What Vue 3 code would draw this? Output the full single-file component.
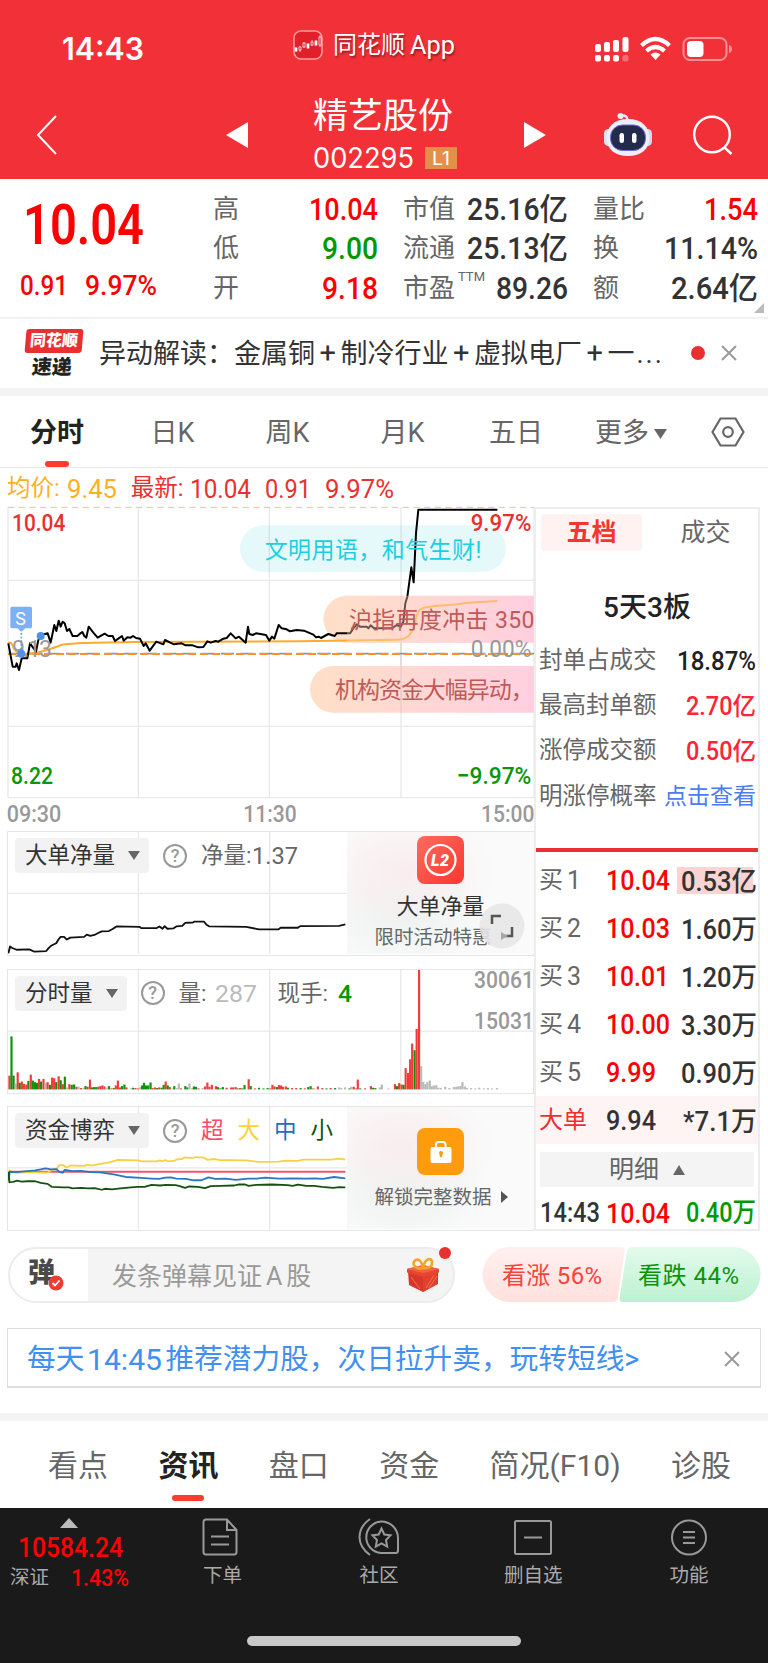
<script setup>
import { h } from 'vue'

// Text stretched to a fixed width, box height is the cap height
const Num = (props) => h('svg', { width: props.w, height: props.h, overflow: 'visible', class: 'num' }, [
    h('text', {
        x: 0,
        y: props.h,
        'font-size': props.h / (props.cap || 0.711),
        textLength: props.w,
        lengthAdjust: 'spacingAndGlyphs',
        fill: 'currentColor'
    }, props.t)
])
Num.props = ['t', 'w', 'h', 'cap']

const quotes = [
    [
        { label: '高', value: '10.04', w: 69, color: 'up' },
        { label: '低', value: '9.00', w: 56, color: 'down' },
        { label: '开', value: '9.18', w: 56, color: 'up' }
    ],
    [
        { label: '市值', value: '25.16亿', w: 101 },
        { label: '流通', value: '25.13亿', w: 101 },
        { label: '市盈', sup: 'TTM', value: '89.26', w: 72 }
    ],
    [
        { label: '量比', value: '1.54', w: 54, color: 'up' },
        { label: '换', value: '11.14%', w: 94 },
        { label: '额', value: '2.64亿', w: 87 }
    ]
]

const periods = ['分时', '日K', '周K', '月K', '五日']

const limits = [
    { label: '封单占成交', value: '18.87%', w: 79, color: 'dark' },
    { label: '最高封单额', value: '2.70亿', w: 70, color: 'rise' },
    { label: '涨停成交额', value: '0.50亿', w: 70, color: 'rise' }
]

const bids = [
    { n: 1, price: '10.04', w: 64, vol: '0.53亿', hot: true },
    { n: 2, price: '10.03', w: 64, vol: '1.60万' },
    { n: 3, price: '10.01', w: 63, vol: '1.20万' },
    { n: 4, price: '10.00', w: 64, vol: '3.30万' },
    { n: 5, price: '9.99', w: 50, vol: '0.90万' }
]

const priceLine = '25,430 38,500 47,500 50,490 57,510 65,475 82,475 90,430 108,455 115,420 125,405 143,400 152,428 163,375 169,393 176,362 182,380 188,365 194,370 201,393 208,387 218,408 232,408 240,401 247,396 253,408 259,413 266,380 280,398 293,413 314,401 325,408 338,408 345,423 356,415 366,408 371,422 382,412 392,413 399,408 408,414 420,416 431,438 437,430 449,452 460,437 469,425 490,433 495,420 511,428 522,433 545,430 557,436 578,436 595,442 610,441 622,424 632,428 647,423 655,425 670,416 680,414 692,400 707,415 717,410 737,428 744,380 748,402 758,405 768,400 798,405 808,422 816,410 823,416 836,375 845,385 860,388 870,394 890,390 912,392 940,404 948,412 956,410 963,414 985,402 1004,408 1010,400 1050,400 1060,385 1070,373 1080,380 1100,380 1105,385 1112,376 1122,385 1178,384 1190,375 1202,380 1210,365 1216,310 1222,290 1234,202 1241,247 1248,100 1255,29 1492,29'
const avgPath = 'M25 430Q32 422 38 438Q45 462 75 462C125 460 155 445 180 436C205 429 260 428 400 426L900 424L1190 419C1225 420 1235 400 1245 370C1251 335 1255 323 1290 320C1320 315 1360 315 1378 312C1400 306 1440 307 1492 303'
const netLine = '24,388 29,367 34,371 48,377 85,376 100,383 134,381 141,372 148,365 163,357 170,345 176,338 186,338 194,346 204,340 244,338 252,331 262,335 274,332 285,326 295,321 316,320 327,314 338,306 405,307 410,311 455,311 463,306 472,313 478,305 486,313 503,312 512,306 529,304 538,295 560,294 565,291 592,291 600,301 608,306 715,307 752,315 808,315 815,310 865,310 872,305 985,304 1003,300'
const bigLine = '25,227 35,232 48,235 80,233 100,234 137,235 148,228 165,222 172,212 184,212 193,219 205,213 246,214 253,210 266,213 290,208 318,203 342,196 402,197 410,200 455,200 464,197 472,200 480,196 487,200 505,199 514,194 528,193 537,188 560,190 567,187 592,189 604,196 620,193 636,196 715,197 750,202 810,201 830,198 865,199 880,195 960,195 985,192 1003,195'
const midLine = '25,258 28,232 47,233 80,230 102,228 118,225 132,222 148,225 164,224 172,233 182,235 188,226 210,230 235,229 262,233 290,234 330,240 365,248 410,251 440,253 462,254 480,250 496,249 512,253 540,254 562,258 585,258 605,249 625,254 655,253 685,257 720,253 745,253 770,250 810,253 850,252 890,253 915,252 938,254 970,248 1003,252'
const smallLine = '25,232 27,264 38,263 50,259 62,262 80,261 102,261 118,266 138,269 150,278 184,280 200,280 210,283 235,281 255,283 275,282 295,287 305,284 325,286 350,283 380,280 400,278 420,278 440,272 465,274 482,272 510,273 522,276 537,281 550,277 575,278 595,282 612,276 640,275 680,274 692,271 712,271 722,275 745,272 790,271 835,273 850,275 865,271 890,275 912,275 935,278 968,281 985,279 1003,280'

// x, height, colour of the volume bars
const sparse = '27,42r 33,162g 39,42g 45,18a 51,52r 57,20g 63,24r 69,17r 76,15r 82,26g 89,45r 95,27g 101,22g 107,20g 113,32r 119,24g 126,32r 132,20a 138,22r 145,14g 151,36r 157,34r 163,22g 170,40r 176,28g 182,16r 188,39g 194,6a 201,16r 208,14g 215,15g 222,8r 228,8a 235,4r 242,5a 248,10g 254,8r 261,30r 267,6g 273,7g 279,7g 285,8r 291,10r 297,12r 303,9r 309,5a 316,10g 323,3r 330,4g 336,12r 342,27r 348,6r 354,10g 361,15g 367,6r 380,3a 386,5g 393,4r 400,3r 406,6a 412,12g 418,20g 424,12g 430,12g 437,21g 443,4r 450,6r 456,4g 462,6r 469,5g 475,14g 481,24r 487,12g 493,7r 500,3a 506,10g 513,4a 519,18a 525,3r 538,10g 544,6g 550,18a 558,4a 563,9g 569,8g 576,3r 588,4a 595,9r 602,21r 608,8r 615,14r 627,10r 633,7g 640,3g 647,7g 658,5r 671,6r 677,6r 684,7r 690,3g 697,4r 703,3g 710,13g 722,31r 728,10g 740,3r 752,5g 765,3g 777,4g 785,3r 791,14r 797,9r 804,7g 810,13r 816,12r 822,8r 830,9r 836,5g 848,4r 860,4r 873,4g 885,3r 895,7g 902,10g 910,3r 923,9r 936,4r 948,3g 960,4r 973,4g 985,6a 991,4a 1002,6a 1015,3g 1020,8a 1027,8r 1033,3r 1039,30r 1046,3g 1060,3r 1077,10r 1083,5g 1090,4g 1103,6a 1109,15a 1128,3a 1147,16r 1153,10g 1159,19r 1166,15r 1172,14g 1178,65r 1185,50r 1191,92r 1197,140r 1204,120g 1210,185r 1217,365r 1223,71a 1229,23a 1235,16a 1241,22a 1248,27a 1254,9a 1260,12a 1267,13a 1273,5a 1280,4a 1293,8a 1305,4a 1318,7a 1325,8a 1331,9a 1337,10a 1343,22a 1350,9a 1356,4a 1368,4a 1380,3a 1392,5a 1405,3a 1417,4a 1429,3a 1443,4a'
const fills = { r: '#ef3b3b', g: '#0a940a', a: '#b9b9b9' }
const bars = sparse.split(' ').map((s) => {
    const [x, rest] = s.split(',')
    return { x: x - 3, h: parseInt(rest), fill: fills[rest.slice(-1)] }
})

const infoTabs = ['看点', '资讯', '盘口', '资金', '简况(F10)', '诊股']
</script>

<template>
    <div class="app">
        <header>
            <div class="status">
                <Num class="clock" t="14:43" :w="82" :h="22" />
                <div class="island">
                    <svg width="30" height="30" viewBox="0 0 30 30">
                        <rect x="1" y="1" width="28" height="28" rx="7" fill="#e0202a" stroke="#ff9a9c" stroke-width="1.6" />
                        <g stroke="#fff" stroke-width=".7" fill="#fff">
                            <path d="M3 17v5M7 16v6M11 12v6M15 13v6M19 10v6M23 10v6M27 5v12" />
                            <rect x="2" y="18" width="2" height="3" />
                            <rect x="6" y="17" width="2" height="3" fill="#e0202a" />
                            <rect x="10" y="13" width="2" height="4" fill="#e0202a" />
                            <rect x="14" y="14" width="2" height="4" />
                            <rect x="18" y="12" width="2" height="3" fill="#e0202a" />
                            <rect x="22" y="11" width="2" height="4" />
                            <rect x="26" y="7" width="2" height="8" fill="#e0202a" />
                        </g>
                    </svg>
                    <span>同花顺</span><Num class="app-word" t="App" :w="45" :h="18" />
                </div>
                <svg class="signals" width="138" height="26" viewBox="595 36 138 26" fill="#fff">
                    <rect x="595" y="44" width="6" height="8" rx="2" />
                    <rect x="604" y="42" width="6" height="10" rx="2" />
                    <rect x="613" y="40" width="6" height="12" rx="2" />
                    <rect x="622.500" y="37" width="6" height="15" rx="2" />
                    <rect x="595" y="55" width="6" height="6.500" rx="2" />
                    <rect x="604" y="55" width="6" height="6.500" rx="2" />
                    <rect x="613" y="55" width="6" height="6.500" rx="2" />
                    <rect x="622.500" y="55" width="6" height="6.500" rx="2" opacity=".3" />
                    <g fill="none" stroke="#fff" stroke-width="4.200">
                        <path d="M641.500 45.500Q655.500 32.500 669.500 45.500" />
                        <path d="M646.500 51Q655.500 43 664.500 51" />
                    </g>
                    <path d="M650.500 54.500Q655.500 50.500 660.500 54.500L655.500 60Z" />
                    <rect x="683.500" y="38" width="43" height="22" rx="6.500" fill="none" stroke="#ff9194" stroke-width="2" />
                    <rect x="687" y="41" width="16.500" height="16" rx="4" />
                    <path d="M729 45q3 1 3 4t-3 4z" fill="#ff9194" />
                </svg>
            </div>
            <div class="title">
                <svg class="back" width="22" height="40" viewBox="0 0 22 40"><path d="M20 1L2 20L20 39" fill="none" stroke="#fff" stroke-width="2" /></svg>
                <svg class="prev" width="22" height="26" viewBox="0 0 22 26"><path d="M22 0V26L0 13Z" fill="#fff" /></svg>
                <div class="name">
                    <h1>精艺股份</h1>
                    <div class="code">
                        <Num t="002295" :w="101" :h="20" />
                        <b><Num t="L1" :w="18" :h="13" /></b>
                    </div>
                </div>
                <svg class="next" width="22" height="26" viewBox="0 0 22 26"><path d="M0 0V26L22 13Z" fill="#fff" /></svg>
                <svg class="robot" width="48" height="45" viewBox="0 0 48 45">
                    <path d="M17 4q6-2 7 5" fill="none" stroke="#e6e6f6" stroke-width="2.500" />
                    <circle cx="16.500" cy="4" r="3" fill="#f0f0fb" />
                    <rect x="0" y="17" width="9" height="17" rx="4.500" fill="#dcdff2" />
                    <rect x="39" y="17" width="9" height="17" rx="4.500" fill="#d3d8f2" />
                    <path d="M24 7C38 7 45.500 15 45.500 26S37 44 24 44 2.500 37 2.500 26 10 7 24 7Z" fill="#eceefa" />
                    <rect x="6.500" y="13" width="35" height="25.500" rx="12" fill="#222b4c" stroke="#7168d8" stroke-width="1" />
                    <rect x="15.500" y="21" width="4.500" height="10" rx="2.200" fill="#fff" />
                    <rect x="28" y="21" width="4.500" height="10" rx="2.200" fill="#fff" />
                </svg>
                <svg class="search" width="40" height="40" viewBox="0 0 40 40" fill="none" stroke="#fff" stroke-width="2.400"><circle cx="19" cy="19.500" r="17.800" /><path d="M31 32L38.500 39" /></svg>
            </div>
        </header>

        <section class="quote">
            <div class="last up">
                <Num t="10.04" :w="121" :h="39" />
                <div class="change"><Num t="0.91" :w="48" :h="20" /><Num t="9.97%" :w="72" :h="20" /></div>
            </div>
            <ul v-for="(col, i) in quotes" :key="i">
                <li v-for="q in col" :key="q.label">
                    <span>{{ q.label }}<sup v-if="q.sup">{{ q.sup }}</sup></span>
                    <Num :class="q.color" :t="q.value" :w="q.w" :h="22" />
                </li>
            </ul>
            <i class="corner"></i>
        </section>

        <section class="notice">
            <div class="express">
                <div class="plate">同花顺</div>
                <div class="speed">速递</div>
            </div>
            <p>异动解读：金属铜<i>+</i>制冷行业<i>+</i>虚拟电厂<i>+</i>一<em>...</em></p>
            <i class="dot"></i>
            <svg width="16" height="16" viewBox="0 0 16 16"><path d="M1 1L15 15M15 1L1 15" stroke="#999" stroke-width="2" /></svg>
        </section>

        <nav class="periods">
            <span v-for="(p, i) in periods" :key="p" :class="{ active: i === 0 }">{{ p }}</span>
            <span class="more">更多<svg width="13" height="10" viewBox="0 0 13 10"><path d="M0 0H13L6.500 10Z" fill="#666" /></svg></span>
            <svg class="hex" width="34" height="30" viewBox="0 0 34 30" fill="none" stroke="#666" stroke-width="2.200"><path d="M9.500 1.500H24.500L32.500 15L24.500 28.500H9.500L1.500 15Z" /><circle cx="17" cy="15" r="4.800" /></svg>
        </nav>

        <div class="summary">
            <span class="avg">均价:<Num t="9.45" :w="50" :h="18" /></span>
            <span>最新:<Num t="10.04" :w="61" :h="18" /></span>
            <Num t="0.91" :w="46" :h="18" />
            <Num t="9.97%" :w="69" :h="18" />
        </div>

        <main>
            <div class="charts">
                <svg class="trend" width="534" height="331" viewBox="0 0 1602 993">
                    <defs>
                        <linearGradient id="warm"><stop offset="0" stop-color="#ffdfc8" /><stop offset="1" stop-color="#ffcfe0" /></linearGradient>
                    </defs>
                    <path d="M24 21V893H1602V21M24 241H1602M24 679H1602M415 21V893M808 21V893M1203 21V893" fill="none" stroke="#e9e9e9" stroke-width="4" />
                    <path d="M24 22H1602" stroke="#dcc7a6" stroke-width="3" stroke-dasharray="19 13" />
                    <g class="pills">
                        <rect x="720" y="76" width="798" height="140" rx="70" fill="#00c4dc" fill-opacity=".1" />
                        <path d="M1602 287H1041a70 70 0 0 0 0 141H1602Z" fill="url(#warm)" />
                        <path d="M1602 498H1000a70 70 0 0 0 0 140H1602Z" fill="url(#warm)" />
                    </g>
                    <path d="M1203 287V638" stroke="#dfc0bd" stroke-width="4" opacity=".6" />
                    <path d="M24 461H1602" stroke="#8b93a0" stroke-width="5" stroke-dasharray="40 18" />
                    <path d="M24 462H1602" stroke="#ff8f2b" stroke-width="6" stroke-dasharray="24 12" />
                    <path :d="avgPath" fill="none" stroke="#ffaa2e" stroke-width="6" />
                    <polyline :points="priceLine" fill="none" stroke="#000" stroke-width="6" stroke-linejoin="round" />
                    <path d="M1041 287H1602V428H1041Z" fill="url(#warm)" opacity=".38" />
                    <text class="mark" x="36" y="471" font-size="69" textLength="120" fill="#999">9.13</text>
                    <path d="M64 388V460" stroke="#5f9fee" stroke-width="5" stroke-dasharray="5 6" />
                    <circle cx="64" cy="461" r="12" fill="#4f93e8" />
                    <circle cx="122" cy="408" r="12" fill="#4f93e8" />
                    <path d="M36 320H91q5 0 5 5V380q0 5-5 5H76L64 395L52 385H36q-5 0-5-5V325q0-5 5-5Z" fill="#7db0f5" />
                    <text class="plain" x="46" y="375" font-size="54" textLength="34" fill="#fff">S</text>
                    <text class="say" x="794" y="173" font-size="69" textLength="650" fill="#1ccfdf">文明用语，和气生财!</text>
                    <text class="say" x="1047" y="384" font-size="69" textLength="556" fill="#bf5a57">沪指再度冲击 350</text>
                    <text class="say" x="1005" y="594" font-size="69" textLength="596" fill="#bf5a57">机构资金大幅异动，</text>
                    <text x="36" y="92" font-size="74" textLength="160" lengthAdjust="spacingAndGlyphs" fill="#e93030">10.04</text>
                    <text x="33" y="853" font-size="74" textLength="126" lengthAdjust="spacingAndGlyphs" fill="#0a960a">8.22</text>
                    <text x="1412" y="92" font-size="74" textLength="182" lengthAdjust="spacingAndGlyphs" fill="#e93030">9.97%</text>
                    <text class="mark" x="1412" y="472" font-size="69" textLength="182" lengthAdjust="spacingAndGlyphs" fill="#999">0.00%</text>
                    <text x="1370" y="853" font-size="74" textLength="224" lengthAdjust="spacingAndGlyphs" fill="#0a960a">−9.97%</text>
                    <g fill="#999" font-size="71" class="mark">
                        <text x="20" y="966" textLength="164" lengthAdjust="spacingAndGlyphs">09:30</text>
                        <text x="730" y="966" textLength="160" lengthAdjust="spacingAndGlyphs">11:30</text>
                        <text x="1443" y="966" textLength="160" lengthAdjust="spacingAndGlyphs">15:00</text>
                    </g>
                </svg>

                <div class="panel">
                    <svg class="plot" viewBox="23 18 1528 372" preserveAspectRatio="none">
                        <path class="grid" d="M402 18V390M783 18V390M23 205H1551" />
                        <polyline :points="netLine" class="line" stroke="#111" />
                    </svg>
                    <div class="legend">
                        <span class="pick">大单净量<i></i></span>
                        <b class="help">?</b>
                        <span class="net">净量:<Num t="1.37" :w="46" :h="17" /></span>
                    </div>
                    <div class="cover">
                        <svg width="47" height="48" viewBox="0 0 47 48">
                            <defs><linearGradient id="l2" x2="1" y2="1"><stop stop-color="#ff6b60" /><stop offset="1" stop-color="#fa372f" /></linearGradient></defs>
                            <rect width="47" height="48" rx="8" fill="url(#l2)" />
                            <circle cx="23.500" cy="24" r="15" fill="none" stroke="#fff" stroke-width="2.200" />
                            <text class="l2" x="14" y="30" font-size="16" textLength="18" fill="#fff">L2</text>
                        </svg>
                        <strong>大单净量</strong>
                        <span>限时活动特惠</span>
                        <svg class="expand" width="46" height="46" viewBox="0 0 46 46"><circle cx="23" cy="23" r="22.500" fill="#e6e6e6" opacity=".88" /><path d="M13 21V13H22M33 24V33H24" fill="none" stroke="#555" stroke-width="2.500" /><path d="M22 29L29 33L22 37Z" fill="#aaa" /></svg>
                    </div>
                </div>

                <div class="panel volume">
                    <svg class="plot" viewBox="23 25 1528 373" preserveAspectRatio="none">
                        <path class="grid" d="M402 25V398M783 25V398M1164 25V398M23 212H1551" />
                        <rect v-for="b in bars" :key="b.x" :x="b.x" :y="390 - b.h" width="6.300" :height="b.h" :fill="b.fill" />
                    </svg>
                    <div class="legend">
                        <span class="pick">分时量<i></i></span>
                        <b class="help">?</b>
                        <span class="qty">量:<Num t="287" :w="42" :h="17" /></span>
                        <span class="hand">现手:<Num t="4" :w="14" :h="17" /></span>
                    </div>
                    <div class="scale"><Num t="30061" :w="60" :h="17" /><Num t="15031" :w="60" :h="17" /></div>
                </div>

                <div class="panel">
                    <svg class="plot" viewBox="23 34 1528 373" preserveAspectRatio="none">
                        <path class="grid" d="M402 34V407M783 34V407M23 220H1551" />
                        <path d="M25 232H1003" class="line" stroke="#f2536b" />
                        <polyline :points="bigLine" class="line" stroke="#f8d142" />
                        <polyline :points="midLine" class="line" stroke="#2678c0" />
                        <polyline :points="smallLine" class="line" stroke="#14520f" />
                    </svg>
                    <div class="legend">
                        <span class="pick">资金博弈<i></i></span>
                        <b class="help">?</b>
                        <span class="sizes"><i>超</i><i>大</i><i>中</i><i>小</i></span>
                    </div>
                    <div class="cover locked">
                        <svg width="47" height="47" viewBox="0 0 47 47">
                            <rect width="47" height="47" rx="8" fill="#ff9c0d" />
                            <path d="M19 20V16.500q0-2.500 2.500-2.500H26q2.500 0 2.500 2.500V20" fill="none" stroke="#fff" stroke-width="2" />
                            <rect x="13.500" y="19" width="21" height="16" rx="2" fill="#fff" />
                            <path d="M24 24V29" stroke="#ff9c0d" stroke-width="2.400" /><circle cx="24" cy="25" r="2" fill="#ff9c0d" />
                        </svg>
                        <span>解锁完整数据</span>
                        <i class="go"></i>
                    </div>
                </div>
            </div>

            <aside>
                <div class="book-tabs"><b>五档</b><span>成交</span></div>
                <h2>5天3板</h2>
                <div v-for="l in limits" :key="l.label" class="limit">
                    <span>{{ l.label }}</span><Num :class="l.color" :t="l.value" :w="l.w" :h="18" />
                </div>
                <div class="limit"><span>明涨停概率</span><a>点击查看</a></div>
                <div class="rule"></div>
                <div v-for="b in bids" :key="b.n" class="bid">
                    <span>买<Num :t="b.n" :w="14" :h="18" /></span>
                    <Num class="up price" :t="b.price" :w="b.w" :h="19.5" />
                    <div :class="['vol', { hot: b.hot }]"><Num :t="b.vol" :w="76" :h="19.5" /></div>
                </div>
                <div class="bid big">
                    <span>大单</span>
                    <Num class="price" t="9.94" :w="50" :h="19.5" />
                    <div class="vol"><Num t="*7.1万" :w="74" :h="19.5" /></div>
                </div>
                <div class="detail">明细<i></i></div>
                <div class="tick">
                    <Num t="14:43" :w="60" :h="19" /><Num class="up price" t="10.04" :w="64" :h="19.5" /><Num class="down" t="0.40万" :w="70" :h="19" />
                </div>
            </aside>
        </main>

        <section class="comment">
            <div class="input">
                <div class="bullet">弹<svg width="16" height="16" viewBox="0 0 16 16"><circle cx="8" cy="8" r="7.500" fill="#f03a34" /><path d="M4.500 8L7 10.500L11.500 5.500" fill="none" stroke="#fff" stroke-width="1.800" /></svg></div>
                <p>发条弹幕见证<i>A</i>股</p>
                <svg class="gift" width="34" height="36" viewBox="0 0 34 36">
                    <path d="M2 14L17 10L32 14V27L17 35L3 28Z" fill="#d8352b" />
                    <path d="M17 19L31 15V27L17 35Z" fill="#e2402f" />
                    <path d="M5 20L14 32M20 31L28 18M23 31L31 19" stroke="#f4704c" stroke-width="1" />
                    <path d="M1 12L17 8L33 12V15.500L17 20L1 15.500Z" fill="#e84530" />
                    <path d="M1 12L17 8L33 12L17 16Z" fill="#f4623f" />
                    <path d="M17 11C8 13 5 5 10 3Q15 1 17 11C19 1 24 1 26 4Q27 12 17 11Z" fill="none" stroke="#f1a52b" stroke-width="2.600" />
                </svg>
                <i class="red"></i>
            </div>
            <svg class="vote" width="279" height="56" viewBox="0 0 279 56">
                <defs>
                    <linearGradient id="bull" x2="0" y2="1"><stop stop-color="#fff0ef" /><stop offset="1" stop-color="#ffe1dd" /></linearGradient>
                    <linearGradient id="bear" x2="0" y2="1"><stop stop-color="#e3fbec" /><stop offset="1" stop-color="#bdf0d2" /></linearGradient>
                </defs>
                <path d="M28 0H139q4 0 3.500 4L136 51q-1 4-5 4H28a27.500 27.500 0 0 1 0-55Z" fill="url(#bull)" />
                <path d="M150 0H251a27.500 27.500 0 0 1 0 55H141q-4 0-3.500-4L145 4q1-4 5-4Z" fill="url(#bear)" />
                <text x="20" y="37" font-size="24" textLength="100" fill="#f8433b">看涨 56%</text>
                <text x="156" y="37" font-size="24" textLength="101" fill="#0a940a">看跌 44%</text>
            </svg>
        </section>

        <section class="ad">
            <p>每天<Num t="14:45" :w="75" :h="21" />推荐潜力股，次日拉升卖，玩转短线&gt;</p>
            <svg width="16" height="16" viewBox="0 0 16 16"><path d="M1 1L15 15M15 1L1 15" stroke="#999" stroke-width="2" /></svg>
        </section>

        <nav class="info">
            <span v-for="(t, i) in infoTabs" :key="t" :class="{ active: i === 1 }">{{ t }}</span>
        </nav>

        <footer>
            <div class="bar">
                <div class="index">
                    <i></i>
                    <Num class="up" t="10584.24" :w="105" :h="20" />
                    <div><span>深证</span><Num class="up" t="1.43%" :w="58" :h="17" /></div>
                </div>
                <div class="item order">
                    <svg width="38" height="38" viewBox="2 0 38 38"><path d="M3 1.500H25L34.500 12V34q0 2.500-2.500 2.500H4q-2.500 0-2.500-2.500V4q0-2.500 2.500-2.500M25 2V12H34M9 18.500H27M9 26.500H27" /></svg>
                    <span>下单</span>
                </div>
                <div class="item social">
                    <svg width="42" height="38" viewBox="0 0 42 38"><path d="M12 1C-2 11-2 27 12 37M23 3.500A16 15.800 0 0 0 23 35H37.500q2.500 0 2.500-2.500V20A16.800 16.500 0 0 0 23 3.500Z" /><path d="M23.500 10.500L26.300 16.500L32.500 17.300L28 22L29.200 28.500L23.500 25.300L17.800 28.500L19 22L14.500 17.300L20.700 16.500Z" /></svg>
                    <span>社区</span>
                </div>
                <div class="item remove">
                    <svg width="38" height="38" viewBox="0 0 38 38"><rect x="1" y="3" width="36" height="33" rx="1.500" /><path d="M10 19.500H28" /></svg>
                    <span>删自选</span>
                </div>
                <div class="item tools">
                    <svg width="38" height="38" viewBox="0 0 38 38"><circle cx="19" cy="19.500" r="17" /><path d="M13 14H25M13 19.500H25M13 25H25" /></svg>
                    <span>功能</span>
                </div>
            </div>
            <div class="home"></div>
        </footer>
    </div>
</template>

<style>
    body {
        margin: 0;
        background: #fff;
    }
</style>

<style scoped>
    .app {
        width: 768px;
        height: 1663px;
        overflow: hidden;
        font-family: Roboto, "Noto Sans CJK SC", sans-serif;
        color: #333;
        line-height: 1;
        white-space: nowrap;
    }
    .app * {
        box-sizing: border-box;
    }
    svg {
        display: block;
        flex: none;
    }
    .num {
        font-weight: 500;
    }
    h1, h2, p, ul {
        margin: 0;
        padding: 0;
        font-weight: 400;
    }
    i, em {
        font-style: normal;
    }
    .up {
        color: #ff0000;
    }
    .down {
        color: #009900;
    }
    .rise {
        color: #ff2436;
    }
    .dark {
        color: #222;
    }

    header {
        height: 179px;
        background: #f23038;
        color: #fff;
    }
    .status {
        height: 90px;
        display: flex;
        padding-left: 62px;
    }
    .clock {
        margin-top: 38px;
        font-family: Inter, sans-serif;
        font-weight: 600;
    }
    .island {
        display: flex;
        margin: 30px 0 0 149px;
        width: 302px;
        font-size: 24px;
    }
    .island span {
        margin: 3px 5px 0 10px;
        text-shadow: 1px 2px 2px #0006;
    }
    .app-word {
        margin-top: 6px;
        font-weight: 400;
        text-shadow: 1px 2px 2px #0006;
    }
    .signals {
        margin-top: 36px;
    }
    .title {
        height: 89px;
        display: flex;
    }
    .back {
        margin: 25px 0 0 36px;
    }
    .prev {
        margin: 32px 0 0 168px;
    }
    .name {
        width: 144px;
        margin: 9px 67px 0 65px;
    }
    h1 {
        font-size: 35px;
        line-height: 36px;
    }
    .code {
        display: flex;
        margin-top: 12px;
        align-items: center;
    }
    .code .num {
        font-weight: 400;
        font-family: Inter, sans-serif;
    }
    .code b {
        display: flex;
        align-items: center;
        justify-content: center;
        width: 32px;
        height: 22px;
        margin-left: 11px;
        background: #e38f4a;
    }
    .next {
        margin-top: 32px;
    }
    .robot {
        margin: 22px 0 0 58px;
    }
    .search {
        margin: 25px 0 0 41px;
    }

    .quote {
        height: 140px;
        border-bottom: 2px solid #f1f1f1;
        display: flex;
    }
    .last {
        width: 213px;
        padding: 26px 0 0 23px;
    }
    .last > .num {
        font-weight: 600;
    }
    .change {
        display: flex;
        gap: 17px;
        margin: 31px 0 0 -3px;
    }
    .quote ul {
        list-style: none;
        width: 165px;
        padding-top: 10px;
        margin-right: 25px;
    }
    .quote ul:nth-child(4) {
        width: 165px;
        margin-right: 0;
    }
    .quote li {
        height: 39.500px;
        display: flex;
        align-items: center;
        justify-content: space-between;
        font-size: 26px;
    }
    .quote li span {
        display: flex;
        color: #666;
    }
    .quote li .num {
        font-weight: 550;
    }
    .quote sup {
        font-size: 13px;
        line-height: 10px;
        margin: -3px 0 0 3px;
    }
    .corner {
        align-self: flex-end;
        margin: 0 0 4px -4px;
        border: 5px solid #bbb;
        border-top-color: transparent;
        border-left-color: transparent;
    }

    .notice {
        height: 77px;
        border-bottom: 8px solid #f4f4f4;
        padding-left: 24px;
        display: flex;
    }
    .express {
        width: 57px;
        margin: 10px 1px 0 0;
        font-weight: 900;
        transform: skewX(-5deg);
    }
    .plate {
        height: 24px;
        border-radius: 3px;
        background: #e93030;
        color: #fff;
        font-size: 16px;
        line-height: 23px;
        text-align: center;
    }
    .speed {
        font-size: 20px;
        text-align: center;
        margin-top: 4px;
        color: #222;
    }
    .notice p {
        margin: 20px 0 0 17px;
        width: 591px;
        font-size: 27px;
    }
    .notice p i {
        display: inline-block;
        width: 25.500px;
        text-align: center;
        font-size: 29px;
    }
    .notice em {
        letter-spacing: 2px;
        margin-left: 2px;
    }
    .dot {
        width: 14px;
        height: 14px;
        margin: 27px 16px 0 1px;
        border-radius: 7px;
        background: #e93030;
    }
    .notice > svg {
        margin-top: 26px;
    }

    .periods {
        height: 72px;
        border-bottom: 1px solid #e8e8e8;
        color: #666;
        font-size: 27px;
        display: grid;
        grid-template-columns: 115px 115px 115px 115px 112px 96px auto;
        padding-top: 24px;
    }
    .periods span {
        text-align: center;
    }
    .periods .active {
        color: #222;
        font-weight: 700;
        display: flex;
        flex-direction: column;
        align-items: center;
        padding-right: 1px;
    }
    .periods .active::after, .info .active::after {
        content: "";
        width: 24px;
        height: 6px;
        border-radius: 3px;
        background: #ff3b30;
        margin-top: 14px;
    }
    .periods .more {
        display: flex;
        align-items: center;
        height: 27px;
        padding-left: 23px;
        gap: 5px;
    }
    .hex {
        justify-self: end;
        margin: -3px 23px 0 0;
    }

    .summary {
        height: 32px;
        padding: 9px 0 0 7px;
        display: flex;
        color: #e93030;
        font-size: 23.500px;
        gap: 14px;
        align-items: flex-start;
    }
    .summary > .num, .summary .num {
        margin-top: 3px;
        font-weight: 400;
    }
    .summary span {
        display: flex;
        gap: 7px;
    }
    .summary .avg {
        color: #ffb01f;
    }

    main {
        display: flex;
        height: 732px;
    }
    .charts {
        width: 534px;
    }
    .trend {
        font-weight: 500;
        overflow: visible;
    }
    .trend .say, .trend .plain, .trend text.mark {
        font-weight: 400;
    }
    .panel {
        display: grid;
        width: 527px;
        height: 125px;
        margin: 0 0 12.500px 7px;
        border: 1.500px solid #e6e6e6;
    }
    .panel > * {
        grid-area: 1 / 1;
    }
    .plot {
        width: 526px;
        height: 122px;
    }
    .grid {
        fill: none;
        stroke: #e9e9e9;
        stroke-width: 4;
    }
    .line {
        fill: none;
        stroke-width: 5.500;
        stroke-linejoin: round;
    }
    .legend {
        display: flex;
        align-items: center;
        height: 35px;
        margin: 6px 0 0 7px;
        font-size: 22.500px;
        color: #666;
    }
    .pick {
        display: flex;
        align-items: center;
        gap: 13px;
        height: 35px;
        padding: 0 9px 0 10px;
        border-radius: 4px;
        background: #f2f2f2;
        color: #333;
    }
    .pick i {
        border: 6.500px solid transparent;
        border-top: 9px solid #666;
        border-bottom: 0;
    }
    .help {
        width: 24px;
        height: 24px;
        margin: 0 14px 0 14px;
        border: 2px solid #999;
        border-radius: 12px;
        color: #999;
        font: 500 18px/20px Roboto, sans-serif;
        text-align: center;
    }
    .legend span {
        display: flex;
        align-items: center;
    }
    .legend .net .num, .legend .qty .num {
        font-weight: 400;
    }
    .net .num {
        margin-left: 1px;
    }
    .qty .num {
        color: #bbb;
        margin: 0 20px 0 9px;
    }
    .hand .num {
        color: #009900;
        margin-left: 10px;
    }
    .sizes {
        gap: 14px;
    }
    .sizes i:nth-child(1) { color: #ff4966; }
    .sizes i:nth-child(2) { color: #fbd03d; }
    .sizes i:nth-child(3) { color: #1a70c4; }
    .sizes i:nth-child(4) { color: #11520c; }
    .scale {
        color: #999;
        justify-self: end;
        display: grid;
        gap: 24px;
        align-content: start;
        padding-top: 1px;
        justify-items: end;
    }
    .cover {
        justify-self: end;
        width: 187px;
        height: 122px;
        background: radial-gradient(ellipse at 30% 32%, #f9ecee 0, #f9ecee00 50%), radial-gradient(ellipse at 30% 68%, #edf2f0 0, #edf2f000 50%), #fafafa;
        display: flex;
        flex-direction: column;
        align-items: center;
        position: relative;
        padding-top: 4px;
        color: #666;
        font-size: 19.500px;
    }
    .cover strong {
        font-size: 22px;
        font-weight: 400;
        color: #333;
        margin: 12px 0 10px;
    }
    .cover span {
        margin-right: 15px;
    }
    .l2 {
        font-weight: 900;
        font-style: italic;
    }
    .expand {
        position: absolute;
        right: 9px;
        top: 71px;
    }
    .locked {
        padding-top: 21px;
    }
    .locked span {
        margin-top: 13px;
    }
    .go {
        position: absolute;
        right: 26px;
        top: 84px;
        border: 6px solid transparent;
        border-left: 7px solid #555;
        border-right: 0;
    }

    aside {
        width: 226px;
        height: 724px;
        margin-top: 7px;
        border: 2px solid #ededed;
    }
    .book-tabs {
        display: flex;
        gap: 13px;
        padding: 5px 0 0 5px;
        font-size: 25px;
        color: #666;
        line-height: 38px;
        text-align: center;
    }
    .book-tabs b {
        width: 101px;
        height: 37px;
        border-radius: 4px;
        background: #fff2f1;
        color: #f5352f;
    }
    .book-tabs span {
        width: 101px;
    }
    h2 {
        font-size: 28px;
        font-weight: 500;
        text-align: center;
        margin: 42px 0 16px;
        color: #222;
    }
    .limit {
        height: 45.300px;
        display: flex;
        align-items: center;
        justify-content: space-between;
        padding: 0 2px 0 3px;
        color: #666;
        font-size: 23.500px;
    }
    .limit a {
        color: #4b7bf5;
        font-size: 23px;
    }
    .rule {
        height: 4px;
        margin-top: 29px;
        background: #e93030;
    }
    .bid {
        height: 48px;
        display: flex;
        align-items: center;
        padding-left: 3px;
        font-size: 24px;
        color: #333;
    }
    .rule + .bid {
        margin-top: 4px;
    }
    .bid span {
        width: 67px;
        display: flex;
        align-items: center;
        gap: 4px;
        color: #666;
    }
    .bid span .num {
        font-weight: 400;
    }
    .price {
        margin-right: auto;
    }
    .up.price {
        font-weight: 550;
    }
    .vol {
        width: 81px;
        height: 27px;
        padding: 4px 0 0 4px;
    }
    .hot {
        background: linear-gradient(#fad3d3, #fad3d3) no-repeat;
        background-size: 76px 27px;
    }
    .big {
        background: #fff4f4;
    }
    .big .vol {
        padding-left: 6px;
    }
    .bid.big span {
        color: #e93030;
    }
    .detail {
        display: flex;
        align-items: center;
        justify-content: center;
        gap: 14px;
        height: 35px;
        margin: 8px 4px 15px;
        background: #f4f4f4;
        color: #666;
        font-size: 25px;
    }
    .detail i {
        border: 6.500px solid transparent;
        border-bottom: 10px solid #666;
        border-top: 0;
    }
    .tick {
        display: flex;
        padding: 1px 2px 0 4px;
    }
    .tick .price {
        margin-left: 6px;
    }

    .comment {
        display: flex;
        padding: 15px 0 0 8px;
        height: 96px;
    }
    .input {
        width: 447px;
        height: 56px;
        border: 2px solid #ececec;
        border-radius: 28px;
        background: linear-gradient(90deg, #fff 78px, #f4f4f4 78px);
        display: flex;
        position: relative;
    }
    .bullet {
        width: 102px;
        padding: 11px 0 0 18px;
        font-size: 27px;
        font-weight: 900;
        color: #4a4a4a;
        display: flex;
    }
    .bullet svg {
        margin: 15px 0 0 -7px;
    }
    .input p {
        width: 294px;
        padding-top: 15px;
        font-size: 25px;
        color: #999;
    }
    .input p i {
        padding: 0 4px;
    }
    .gift {
        margin-top: 8px;
    }
    .red {
        position: absolute;
        right: 2px;
        top: -2px;
        width: 12px;
        height: 12px;
        border-radius: 6px;
        background: #e93030;
    }
    .vote {
        margin-left: 27px;
    }

    .ad {
        height: 60px;
        margin: 0 7px;
        border: 1px solid #ddd;
        border-bottom-width: 2px;
        display: flex;
        justify-content: space-between;
        align-items: center;
        padding: 2px 20px 0 19px;
        color: #4090f0;
        font-size: 28.700px;
    }
    .ad p {
        display: flex;
        align-items: center;
        padding-top: 2px;
    }
    .ad .num {
        margin: 0 3px;
        font-weight: 400;
    }

    .info {
        padding: 30px 37px 0 48px;
        margin-top: 25px;
        height: 95px;
        border-top: 8px solid #f4f4f4;
        display: flex;
        justify-content: space-between;
        color: #666;
        font-size: 30px;
    }
    .info .active {
        color: #222;
        font-weight: 700;
        display: flex;
        flex-direction: column;
        align-items: center;
    }
    .info .active::after {
        width: 32px;
    }

    footer {
        height: 155px;
        background: #1a1a1a;
        color: #aaa;
        font-size: 19.500px;
    }
    .bar {
        height: 128px;
        display: flex;
    }
    .index {
        width: 203px;
        padding: 10px 0 0 10px;
    }
    .index i {
        display: block;
        width: 0;
        margin-left: 50px;
        border: 9px solid transparent;
        border-bottom: 10px solid #bbb;
        border-top: 0;
    }
    .index > .num {
        margin: 9px 0 0 8px;
    }
    .index div {
        display: flex;
        gap: 22px;
        align-items: center;
        margin-top: 11px;
    }
    .item {
        display: flex;
        flex-direction: column;
        align-items: center;
        padding-top: 10px;
        gap: 10px;
    }
    .item svg {
        fill: none;
        stroke: #999;
        stroke-width: 2;
    }
    .order svg {
        overflow: visible;
    }
    .order {
        margin-right: 116px;
    }
    .social {
        margin-right: 104px;
    }
    .remove {
        margin-right: 107px;
    }
    .home {
        width: 274px;
        height: 10px;
        border-radius: 5px;
        background: #c8c8c8;
        margin: 0 auto;
    }
</style>
